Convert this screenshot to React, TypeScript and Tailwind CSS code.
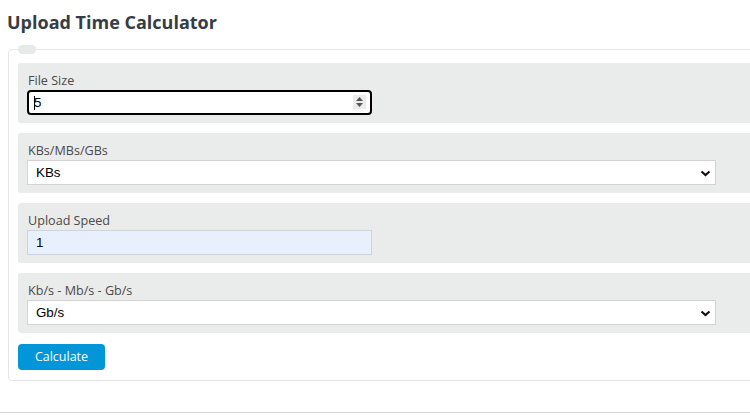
import React from "react";

const Chevron = () => (
  <svg width="11" height="7" viewBox="0 0 11 7" className="absolute right-[4px] top-[9px]">
    <polyline points="1.5,1.5 5.5,5 9.5,1.5" fill="none" stroke="#111" strokeWidth="2.2" />
  </svg>
);

const Label = ({ children }: { children: React.ReactNode }) => (
  <div className="h-[18px] text-[12.6px] leading-[18px] text-[#4a4a4a] pl-[1px]" style={{ fontFamily: '"Open Sans", sans-serif' }}>
    {children}
  </div>
);

export default function App() {
  return (
    <div className="w-[750px] h-[415px] overflow-hidden bg-white relative" style={{ fontFamily: '"Open Sans", sans-serif' }}>
      <h1 className="mt-[10px] pl-[7px] h-[24px] leading-[24px] text-[18px] font-bold text-[#353c45]">
        Upload Time Calculator
      </h1>
      <div className="relative mt-[15px] ml-[8px] w-[800px] border border-[#e6e6e6] rounded-[4px] pt-[13px] px-[9px] pb-[10px] flex flex-col gap-[10px]">
        <div className="absolute left-[9px] top-[-5px] w-[18px] h-[9px] rounded-full bg-[#e8e9e9]" />
        <div className="rounded-[3px] bg-[#eaebeb] pt-[9px] pl-[9px] pb-[8px]">
          <Label>File Size</Label>
          <div className="relative w-[345px] h-[25px] border-2 border-black rounded-[4px] bg-white flex items-center pl-[5px]">
            <span className="text-[13.33px] text-black leading-none" style={{ fontFamily: '"Liberation Sans", Arial, sans-serif' }}>5</span>
            <span className="absolute left-[5px] top-[4px] w-[1px] h-[14px] bg-black" />
            <div className="absolute right-[4px] top-[3px] w-[13px] h-[14px] bg-[#ececec] flex flex-col items-center justify-center gap-[2px]">
              <svg width="7" height="4" viewBox="0 0 7 4"><polygon points="3.5,0 7,4 0,4" fill="#555" /></svg>
              <svg width="7" height="4" viewBox="0 0 7 4"><polygon points="0,0 7,0 3.5,4" fill="#555" /></svg>
            </div>
          </div>
        </div>
        <div className="rounded-[3px] bg-[#eaebeb] pt-[9px] pl-[9px] pb-[8px]">
          <Label>KBs/MBs/GBs</Label>
          <div className="relative w-[689px] h-[25px] border border-[#d3d3d3] bg-white flex items-center pl-[8px]">
            <span className="text-[13.33px] text-black" style={{ fontFamily: '"Liberation Sans", Arial, sans-serif' }}>KBs</span>
            <Chevron />
          </div>
        </div>
        <div className="rounded-[3px] bg-[#eaebeb] pt-[9px] pl-[9px] pb-[8px]">
          <Label>Upload Speed</Label>
          <div className="relative w-[345px] h-[25px] border border-[#cfd4db] bg-[#e8f0fe] flex items-center pl-[8px]">
            <span className="text-[13.33px] text-black" style={{ fontFamily: '"Liberation Sans", Arial, sans-serif' }}>1</span>
          </div>
        </div>
        <div className="rounded-[3px] bg-[#eaebeb] pt-[9px] pl-[9px] pb-[8px]">
          <Label>Kb/s - Mb/s - Gb/s</Label>
          <div className="relative w-[689px] h-[25px] border border-[#d3d3d3] bg-white flex items-center pl-[8px]">
            <span className="text-[13.33px] text-black" style={{ fontFamily: '"Liberation Sans", Arial, sans-serif' }}>Gb/s</span>
            <Chevron />
          </div>
        </div>
        <div>
          <button className="w-[87px] h-[26px] rounded-[4px] bg-[#0296d8] text-white text-[12.5px] leading-[26px] text-center">
            Calculate
          </button>
        </div>
      </div>
      <div className="mt-[31px] h-[1px] bg-[#d4d4da]" />
    </div>
  );
}
